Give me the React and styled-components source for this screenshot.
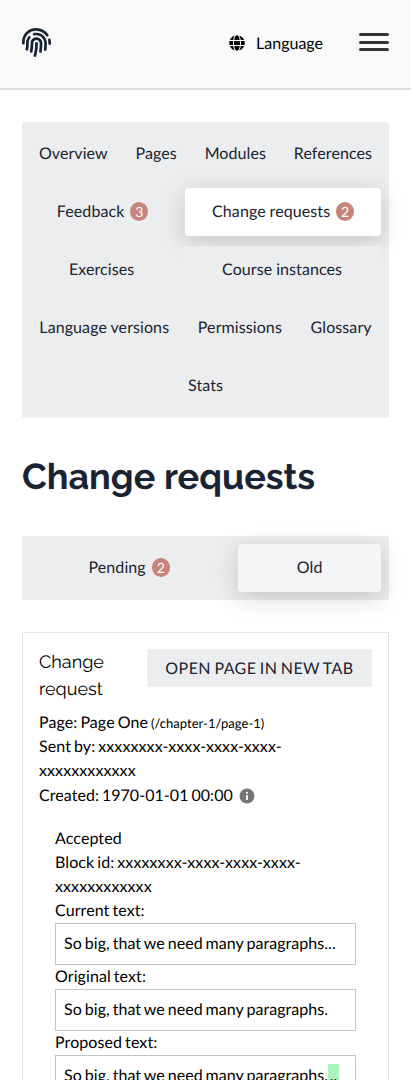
import React from "react";
import styled, { createGlobalStyle } from "styled-components";
import { FaFingerprint, FaGlobe } from "react-icons/fa";

const GlobalStyle = createGlobalStyle`
  *, *::before, *::after { box-sizing: border-box; }
  html { overflow: hidden; height: 1080px; }
  body {
    margin: 0;
    height: 1080px;
    overflow: hidden;
    background: #fff;
    color: #000;
    font-family: Lato, "Open Sans", sans-serif;
    font-size: 16px;
    line-height: 24px;
    letter-spacing: 0.09px;
    word-spacing: -1.2px;
    text-rendering: geometricPrecision;
  }
`;

const Header = styled.header`
  display: flex;
  align-items: center;
  height: 90px;
  padding: 0 22px;
  background: #f9f9f9;
  border-bottom: 2px solid #dcdcdc;
`;

const HomeLink = styled.div`
  display: flex;
  margin: -3px auto 0 0;
  color: #1a2333;
`;

const LanguageButton = styled.div`
  display: flex;
  align-items: center;
  gap: 11px;
  margin: -2px 36px 0 0;
`;

const LanguageLabel = styled.span`
  padding-top: 2px;
  letter-spacing: 0;
`;

const MenuButton = styled.div`
  display: flex;
  flex-direction: column;
  justify-content: space-between;
  width: 30px;
  height: 18px;
  margin-top: -4px;
`;

const MenuBar = styled.span`
  height: 3px;
  border-radius: 2px;
  background: #333;
`;

const Main = styled.main`
  padding: 32px 22px 0;
`;

const Tabs = styled.nav`
  display: flex;
  flex-wrap: wrap;
  gap: 10px;
  padding: 8px;
  border-radius: 3px;
  background: #ebedee;
  color: #1a2333;
  word-spacing: -0.3px;
`;

const Tab = styled.div`
  display: flex;
  flex: 1 0 auto;
  align-items: center;
  justify-content: center;
  height: 48px;
  padding: 0 8px;
  border-radius: 4px;
  background: ${(p) => p.$fill || "#ebedee"};
  box-shadow: ${(p) => (p.$fill ? "0 6px 24px rgba(0, 0, 0, 0.17)" : "none")};
  line-height: 20px;
`;

const Badge = styled.span`
  display: flex;
  align-items: center;
  justify-content: center;
  width: 18px;
  height: 19px;
  margin: -1px 0 0 6px;
  border-radius: 50%;
  background: #c68578;
  color: #fff;
  font-size: 14px;
`;

const Title = styled.h1`
  margin: 32px 0;
  color: #1a2333;
  font-family: Raleway, Lato, sans-serif;
  font-size: 36px;
  font-weight: 700;
  letter-spacing: 0;
  line-height: 54px;
  word-spacing: 0;
`;

const Card = styled.section`
  height: 620px;
  margin-top: 32px;
  padding: 16px;
  border: 1px solid #e2e4e6;
`;

const CardHeader = styled.div`
  display: flex;
  align-items: flex-start;
  justify-content: space-between;
  margin-bottom: 8px;
`;

const CardTitle = styled.h2`
  width: 90px;
  margin: 0;
  font-family: Raleway, Lato, sans-serif;
  font-size: 18px;
  font-weight: 400;
  letter-spacing: 0;
  line-height: 27px;
`;

const OpenButton = styled.div`
  width: 225px;
  height: 38px;
  border: 1px solid #eff1f2;
  background: #ebedee;
  color: #1a2333;
  letter-spacing: 0.45px;
  line-height: 38px;
  text-align: center;
`;

const PageRow = styled.div`
  height: 24px;
`;

const PagePath = styled.span`
  font-size: 13px;
  letter-spacing: 0.03px;
`;

const CreatedRow = styled.div`
  display: flex;
  align-items: center;
  gap: 6px;
  height: 25px;
  letter-spacing: 0.05px;
`;

const Proposal = styled.div`
  padding: 19px 16px;
`;

const TextBox = styled.div`
  height: 42px;
  padding: 8px;
  border: 1px solid #c4c4c6;
  letter-spacing: 0.05px;
  white-space: nowrap;
`;

const Added = styled.span`
  display: inline-block;
  height: 24px;
  padding: 0 1.6px;
  background: #abf2bc;
`;

const InfoIcon = () => (
  <svg width="16" height="16" viewBox="0 0 16 16">
    <circle cx="8" cy="8" r="7.5" fill="#757575" />
    <rect x="7.1" y="3.9" width="1.8" height="1.8" fill="#fff" />
    <rect x="7.1" y="7" width="1.8" height="5" fill="#fff" />
  </svg>
);

const sections = [
  { label: "Overview" },
  { label: "Pages" },
  { label: "Modules" },
  { label: "References" },
  { label: "Feedback", count: 3 },
  { label: "Change requests", count: 2, fill: "#fff" },
  { label: "Exercises" },
  { label: "Course instances" },
  { label: "Language versions" },
  { label: "Permissions" },
  { label: "Glossary" },
  { label: "Stats" },
];

const states = [
  { label: "Pending", count: 2 },
  { label: "Old", fill: "#f4f5f7" },
];

const TabList = ({ items }) => (
  <Tabs>
    {items.map((item) => (
      <Tab key={item.label} $fill={item.fill}>
        {item.label}
        {item.count && <Badge>{item.count}</Badge>}
      </Tab>
    ))}
  </Tabs>
);

export default function App() {
  return (
    <>
      <GlobalStyle />
      <Header>
        <HomeLink>
          <FaFingerprint size={29} />
        </HomeLink>
        <LanguageButton>
          <FaGlobe size={16} />
          <LanguageLabel>Language</LanguageLabel>
        </LanguageButton>
        <MenuButton>
          <MenuBar />
          <MenuBar />
          <MenuBar />
        </MenuButton>
      </Header>
      <Main>
        <TabList items={sections} />
        <Title>Change requests</Title>
        <TabList items={states} />
        <Card>
          <CardHeader>
            <CardTitle>Change request</CardTitle>
            <OpenButton>OPEN PAGE IN NEW TAB</OpenButton>
          </CardHeader>
          <PageRow>
            Page: Page One <PagePath>(/chapter-1/page-1)</PagePath>
          </PageRow>
          <div>Sent by: xxxxxxxx-xxxx-xxxx-xxxx-xxxxxxxxxxxx</div>
          <CreatedRow>
            Created: 1970-01-01 00:00 <InfoIcon />
          </CreatedRow>
          <Proposal>
            <div>Accepted</div>
            <div>Block id: xxxxxxxx-xxxx-xxxx-xxxx-xxxxxxxxxxxx</div>
            <div>Current text:</div>
            <TextBox>So big, that we need many paragraphs...</TextBox>
            <div>Original text:</div>
            <TextBox>So big, that we need many paragraphs.</TextBox>
            <div>Proposed text:</div>
            <TextBox>
              So big, that we need many paragraphs.<Added>..</Added>
            </TextBox>
          </Proposal>
        </Card>
      </Main>
    </>
  );
}
